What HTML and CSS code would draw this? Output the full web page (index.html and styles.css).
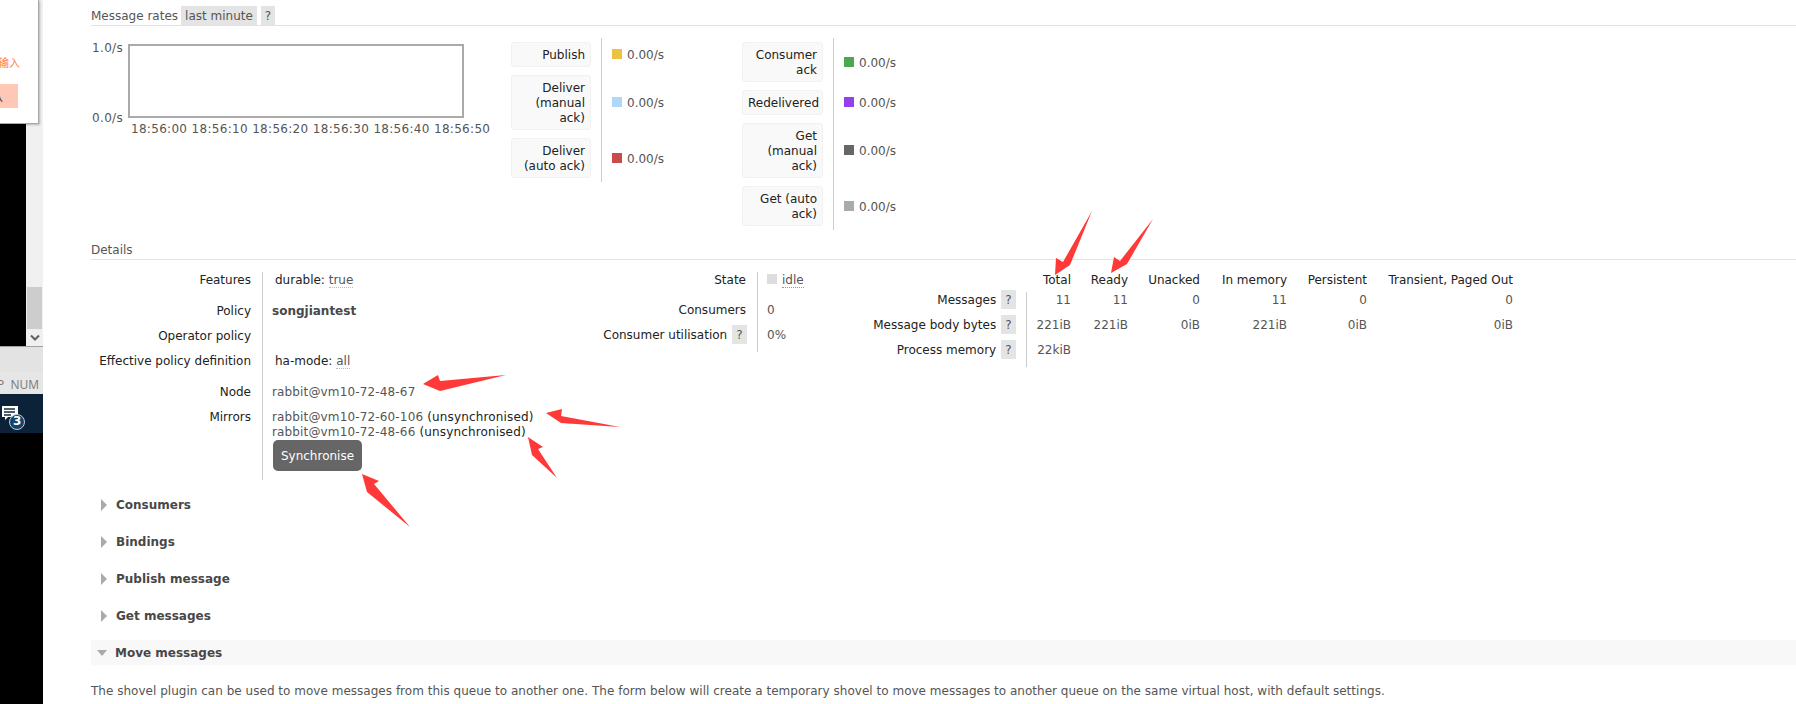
FILE: index.html
```html
<!DOCTYPE html>
<html lang="en">
<head>
<meta charset="utf-8">
<title>Queue songjiantest</title>
<link rel="stylesheet" href="styles.css">
</head>
<body>
<aside class="strip">
  <div class="strip-top">
    <div class="black"></div>
    <div class="scrollbar">
      <div class="track"></div>
      <div class="thumb"></div>
      <div class="scroll-arrow"><svg width="10" height="8" viewBox="0 0 10 8"><path d="M1 1.5 5 5.5 9 1.5" fill="none" stroke="#606060" stroke-width="2"/></svg></div>
    </div>
  </div>
  <div class="status-a"></div>
  <div class="status-b"><span>P&nbsp; NUM</span></div>
  <div class="navy">
    <svg width="30" height="30" viewBox="0 0 30 30">
      <path d="M2 2H18V13H8L5 16V13H2Z" fill="#fff"/>
      <path d="M4 5H15M4 8H15M4 11H11" stroke="#1a2a3a" stroke-width="1.4"/>
      <circle cx="17" cy="18" r="7.5" fill="#14436c" stroke="#b9cddd" stroke-width="1"/>
    </svg>
    <span class="badge">3</span>
  </div>
  <div class="black fill"></div>
  <div class="popup">
    <div class="popup-hint">请输入</div>
    <div class="popup-btn">确认</div>
  </div>
</aside>

<main class="content">
  <div class="title title-first">
    <span>Message rates</span>
    <span class="pill">last minute</span>
    <span class="pill q">?</span>
  </div>

  <section class="rates">
    <div class="chart">
      <div class="ylabels"><span>1.0/s</span><span>0.0/s</span></div>
      <div class="plot-col">
        <div class="plot"></div>
        <div class="xlabels">
          <span>18:56:00</span><span>18:56:10</span><span>18:56:20</span><span>18:56:30</span><span>18:56:40</span><span>18:56:50</span>
        </div>
      </div>
    </div>

    <table class="legend legend-a">
      <tr><th><div class="box">Publish</div></th><td><span class="sw c1"></span>0.00/s</td></tr>
      <tr><th><div class="box">Deliver (manual ack)</div></th><td><span class="sw c2"></span>0.00/s</td></tr>
      <tr><th><div class="box">Deliver (auto ack)</div></th><td><span class="sw c3"></span>0.00/s</td></tr>
    </table>

    <table class="legend legend-b">
      <tr><th><div class="box">Consumer ack</div></th><td><span class="sw c4"></span>0.00/s</td></tr>
      <tr><th><div class="box">Redelivered</div></th><td><span class="sw c5"></span>0.00/s</td></tr>
      <tr><th><div class="box">Get (manual ack)</div></th><td><span class="sw c6"></span>0.00/s</td></tr>
      <tr><th><div class="box">Get (auto ack)</div></th><td><span class="sw c7"></span>0.00/s</td></tr>
    </table>
  </section>

  <div class="title title-details"><span>Details</span></div>

  <section class="details">
    <table class="facts facts-a">
      <tr class="gap"><th>Features</th><td><span class="ind"><b class="k">durable:</b> <abbr>true</abbr></span></td></tr>
      <tr><th>Policy</th><td><strong>songjiantest</strong></td></tr>
      <tr><th>Operator policy</th><td>&nbsp;</td></tr>
      <tr class="gap"><th>Effective policy definition</th><td><span class="ind"><b class="k">ha-mode:</b> <abbr>all</abbr></span></td></tr>
      <tr><th>Node</th><td class="nodes">rabbit@vm10-72-48-67</td></tr>
      <tr><th>Mirrors</th><td class="nodes">
        <div>rabbit@vm10-72-60-106 <span class="k">(unsynchronised)</span></div>
        <div>rabbit@vm10-72-48-66 <span class="k">(unsynchronised)</span></div>
        <button class="sync" type="button">Synchronise</button>
      </td></tr>
    </table>

    <table class="facts facts-b">
      <tr class="r-state"><th>State</th><td><span class="sw idle-sw"></span><abbr class="idle">idle</abbr></td></tr>
      <tr class="r-cons"><th>Consumers</th><td>0</td></tr>
      <tr class="r-util"><th>Consumer utilisation <span class="help">?</span></th><td>0%</td></tr>
    </table>

    <table class="totals">
      <tr class="head"><th></th><th class="n1">Total</th><th class="n2">Ready</th><th class="n3">Unacked</th><th class="n4">In memory</th><th class="n5">Persistent</th><th class="n6">Transient, Paged Out</th></tr>
      <tr><th class="lab">Messages <span class="help">?</span></th><td class="first">11</td><td>11</td><td>0</td><td>11</td><td>0</td><td>0</td></tr>
      <tr><th class="lab">Message body bytes <span class="help">?</span></th><td class="first">221iB</td><td>221iB</td><td>0iB</td><td>221iB</td><td>0iB</td><td>0iB</td></tr>
      <tr><th class="lab">Process memory <span class="help">?</span></th><td class="first">22kiB</td><td></td><td></td><td></td><td></td><td></td></tr>
    </table>
  </section>

  <div class="sec"><i class="tri-right"></i>Consumers</div>
  <div class="sec"><i class="tri-right"></i>Bindings</div>
  <div class="sec"><i class="tri-right"></i>Publish message</div>
  <div class="sec"><i class="tri-right"></i>Get messages</div>
  <div class="sec open"><i class="tri-down"></i>Move messages</div>
  <p class="note">The shovel plugin can be used to move messages from this queue to another one. The form below will create a temporary shovel to move messages to another queue on the same virtual host, with default settings.</p>
</main>

<svg class="arrows" width="1796" height="704" viewBox="0 0 1796 704">
  <path d="M1092 211 1070 265 1055 275 1056 258 1063 262Z"/>
  <path d="M1153 219 1127 264 1111 273 1114 257 1120 261Z"/>
  <path d="M506 375 440 391 423 384 438 375 440 381Z"/>
  <path d="M620 427 561 423 546 413 562 409 561 416Z"/>
  <path d="M557 478 532 455 528 437 543 447 538 449Z"/>
  <path d="M410 527 367 492 362 474 379 481 374 484Z"/>
</svg>
</body>
</html>
```
FILE: styles.css
```css
* { box-sizing: border-box; }

html, body { height: 100%; }

body {
  margin: 0;
  display: flex;
  height: 704px;
  overflow: hidden;
  background: #fff;
  color: #555;
  font: 12px/15px "DejaVu Sans", Verdana, sans-serif;
}

/* left desktop strip */
.strip {
  position: relative;
  flex: 0 0 43px;
  width: 43px;
  min-width: 0;
  overflow: hidden;
  display: flex;
  flex-direction: column;
  background: #000;
}
.strip-top { display: flex; height: 346px; }
.black { background: #000; flex: 0 0 26px; }
.black.fill { flex: 1; }
.scrollbar {
  flex: 1;
  display: flex;
  flex-direction: column;
  padding-top: 123px;
  background: #f0f0f0;
}
.track { height: 164px; }
.thumb { height: 42px; margin: 0 1px; background: #cdcdcd; }
.scroll-arrow { flex: 1; display: flex; align-items: center; justify-content: center; }
.status-a { height: 26px; border-top: 1px solid #a0a0a0; background: #e3e3e3; }
.status-b {
  height: 22px;
  background: #e6e6e6;
  display: flex;
  justify-content: flex-end;
  align-items: center;
  overflow: hidden;
  padding: 2px 4px 0 0;
  color: #7a7a7a;
  font-family: "Open Sans", sans-serif;
  font-size: 12px;
  white-space: nowrap;
}
.navy {
  position: relative;
  height: 39px;
  padding-top: 10px;
  background: #0b2239;
}
.navy svg { display: block; }
.badge {
  position: absolute;
  left: 13px;
  top: 20px;
  width: 8px;
  color: #fff;
  font-size: 12px;
  font-weight: bold;
  text-align: center;
}
.popup {
  position: absolute;
  left: 0;
  top: 0;
  width: 39px;
  height: 124px;
  overflow: hidden;
  background: #fff;
  border-right: 1px solid #a9a9a9;
  border-bottom: 1px solid #a9a9a9;
  box-shadow: 1px 1px 2px rgba(0, 0, 0, .25);
  padding-top: 54px;
}
.popup-hint {
  width: 20px;
  display: flex;
  justify-content: flex-end;
  white-space: nowrap;
  color: #ff7a45;
  font: 11px/16px "Noto Sans CJK SC", sans-serif;
}
.popup-btn {
  width: 18px;
  height: 24px;
  margin-top: 14px;
  display: flex;
  justify-content: flex-end;
  align-items: center;
  overflow: hidden;
  white-space: nowrap;
  padding-right: 15px;
  background: #ffc7b5;
  color: #333;
  font: 12px/24px "Noto Sans CJK SC", sans-serif;
}

/* main page */
.content { flex: 1; min-width: 0; padding-left: 48px; }

.title {
  display: flex;
  align-items: center;
  border-bottom: 1px solid #e2e2e2;
  color: #555;
}
.title-first { height: 20px; margin-top: 6px; align-items: stretch; }
.title-first > span:first-child { padding-top: 2px; display: flex; align-items: center; }
.title-details { height: 18px; margin-top: 12px; }
.pill {
  margin-left: 3px;
  padding: 2px 4px 0;
  display: flex;
  align-items: center;
  background: #e4e4e4;
}
.pill.q { margin-left: 4px; }

.rates { display: flex; align-items: flex-start; margin-top: 12px; }

.chart { display: flex; flex: 0 0 420px; }
.ylabels {
  flex: 0 0 32px;
  height: 85px;
  margin: 3px 5px 0 0;
  display: flex;
  flex-direction: column;
  justify-content: space-between;
  text-align: right;
  letter-spacing: .3px;
}
.plot-col { margin-top: 6px; }
.plot { width: 336px; height: 74px; border: 2px solid #aaa; }
.xlabels { display: flex; margin-top: 4px; padding-left: 3px; letter-spacing: .3px; }
.xlabels span { flex: 0 0 60.6px; white-space: nowrap; }

table { border-spacing: 0; border-collapse: separate; }
th { font-weight: normal; color: #222; text-align: right; padding: 0; }
td { padding: 0; }

.legend th { padding: 4px 10px 4px 0; }
.legend td {
  padding: 2px 0 0 10px;
  border-left: 1px solid #ccc;
  vertical-align: middle;
  white-space: nowrap;
}
.box {
  padding: 5px 5px 3px;
  background: #f9f9f9;
  border: 1px solid #f1f1f1;
  border-radius: 3px;
}
.legend-a th { width: 90px; }
.legend-a .box { width: 80px; }
.legend-a td { width: 141px; }
.legend-b th { width: 91px; }
.legend-b .box { width: 81px; }

.sw {
  display: inline-block;
  width: 10px;
  height: 10px;
  margin-right: 5px;
  vertical-align: 0;
}
.c1 { background: #edc240; }
.c2 { background: #afd8f8; }
.c3 { background: #cb4b4b; }
.c4 { background: #4da74d; }
.c5 { background: #9440ed; }
.c6 { background: #666; }
.c7 { background: #aaa; }
.idle-sw { background: #ddd; }

/* details */
.details { display: flex; align-items: flex-start; margin: 12px 0; }

.facts th { padding: 1px 11px 0 0; vertical-align: top; white-space: nowrap; }
.facts td { padding: 1px 0 9px 9px; border-left: 1px solid #ccc; vertical-align: top; }
.facts .gap td { padding-bottom: 15px; }
.facts-a th { width: 171px; }
.facts-a td { width: 295px; }
.facts-b th { width: 200px; }
.facts-b td { width: 48px; white-space: nowrap; }
.r-state td { height: 30px; }
.r-cons td { height: 24px; }
.r-util td { height: 25px; }
.r-util .help { margin-right: -1px; }

.k { font-weight: normal; color: #222; }
.ind { padding-left: 3px; }
.nodes { letter-spacing: .15px; }
abbr { border-bottom: 1px dotted #bbb; }
.facts abbr { text-decoration: none; }
.idle { border-bottom: 1px dotted #999; }
strong { color: #484848; }

.sync {
  display: block;
  width: 89px;
  height: 31px;
  margin: 0 0 0 1px;
  padding: 2px 0 0;
  border: 0;
  border-radius: 5px;
  background: #666;
  color: #fff;
  font: inherit;
}

.help {
  display: inline-block;
  width: 15px;
  height: 19px;
  margin: -3px 0 -2px 1px;
  padding-top: 1px;
  vertical-align: top;
  background: #e4e4e4;
  color: #555;
  line-height: 18px;
  text-align: center;
}

.totals .head th { height: 20px; padding-top: 1px; vertical-align: top; white-space: nowrap; }
.totals .lab { width: 221px; padding: 1px 10px 0 0; white-space: nowrap; vertical-align: top; }
.totals td { height: 25px; padding-top: 1px; text-align: right; vertical-align: top; }
.totals .first { border-left: 1px solid #ccc; }
.n1 { width: 45px; }
.n2 { width: 57px; }
.n3 { width: 72px; }
.n4 { width: 87px; }
.n5 { width: 80px; }
.n6 { width: 146px; }

/* collapsible sections */
.sec {
  display: flex;
  align-items: center;
  height: 25px;
  padding-top: 2px;
  margin-bottom: 12px;
  color: #484848;
  font-weight: bold;
}
.sec.open { margin-bottom: 0; background: #f8f8f8; }
.tri-right {
  width: 0;
  height: 0;
  margin: -2px 9px 0 10px;
  border-left: 6px solid #aaa;
  border-top: 6px solid transparent;
  border-bottom: 6px solid transparent;
}
.tri-down {
  width: 0;
  height: 0;
  margin: -2px 8px 0 6px;
  border-top: 6px solid #aaa;
  border-left: 5.5px solid transparent;
  border-right: 5.5px solid transparent;
}
.note { margin: 19px 0 0; white-space: nowrap; letter-spacing: .02px; }

/* annotations drawn over the screenshot */
.arrows { position: absolute; left: 0; top: 0; pointer-events: none; }
.arrows path { fill: #ff3838; }
```
